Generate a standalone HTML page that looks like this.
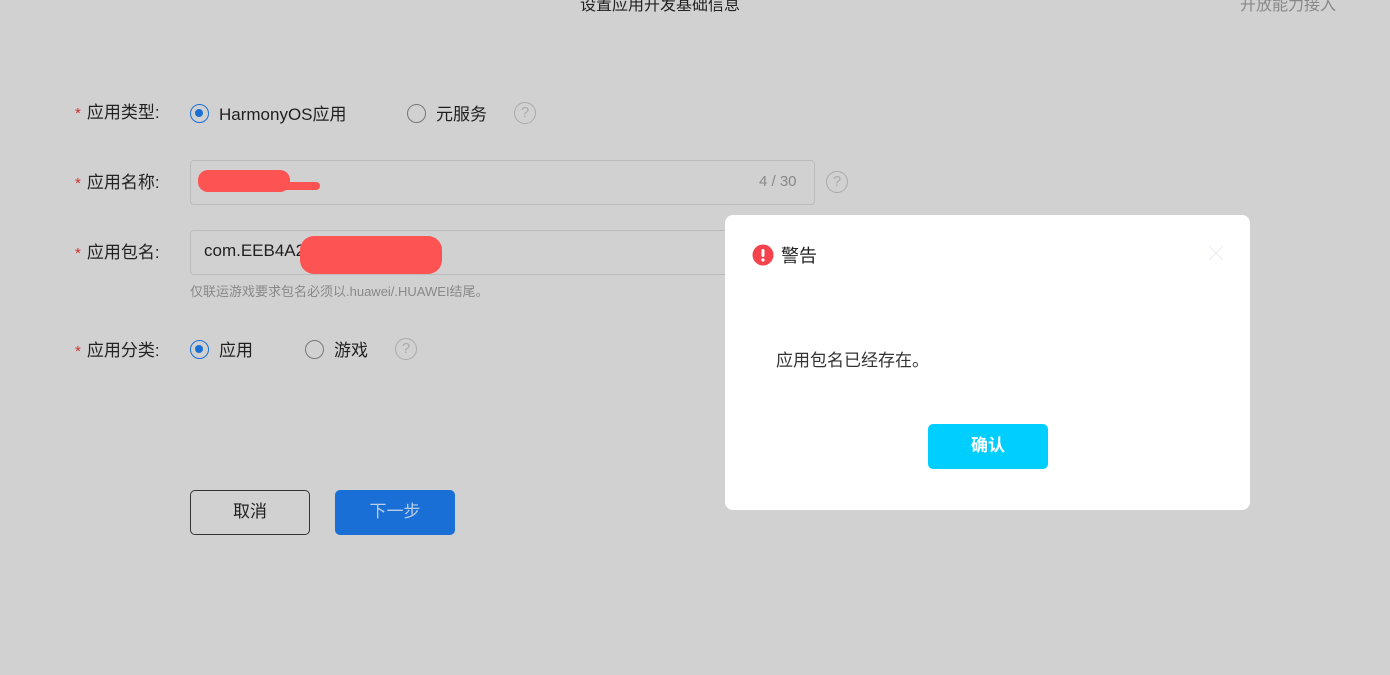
<!DOCTYPE html><html><head><meta charset="utf-8"><style>
body{margin:0;width:1390px;height:675px;background:#d1d1d1;font-family:"Liberation Sans","Noto Sans CJK SC",sans-serif;position:relative;overflow:hidden;color:#1f1f1f}
.a{position:absolute;white-space:nowrap}
.lbl{font-size:17px;color:#222}
.lbl b{color:#d0302f;font-weight:normal;margin-right:6px;font-size:15px}
.radio{position:absolute;width:19px;height:19px;border:1.5px solid #777;border-radius:50%;box-sizing:border-box}
.radio.on{border-color:#1a6fd6}
.radio.on:after{content:"";position:absolute;left:4px;top:4px;width:8px;height:8px;border-radius:50%;background:#1a6fd6}
.q{position:absolute;width:22px;height:22px;border:1.5px solid #aaa;border-radius:50%;box-sizing:border-box;color:#aaa;font-size:15px;text-align:center;line-height:20px}
.inp{position:absolute;border:1px solid #bcbcbc;border-radius:4px;box-sizing:border-box;background:#d1d1d1}
.scr{position:absolute;background:#fd5353;border-radius:10px}
</style></head><body>
<div class="a" style="left:580px;top:-9px;font-size:16px;color:#222">设置应用开发基础信息</div>
<div class="a" style="left:1240px;top:-9px;font-size:16px;color:#888">开放能力接入</div>

<div class="a lbl" style="left:75px;top:98px"><b>*</b>应用类型:</div>
<div class="radio on" style="left:190px;top:104px"></div>
<div class="a" style="left:219px;top:100px;font-size:17px">HarmonyOS应用</div>
<div class="radio" style="left:407px;top:104px"></div>
<div class="a" style="left:436px;top:100px;font-size:17px">元服务</div>
<div class="q" style="left:514px;top:102px">?</div>

<div class="a lbl" style="left:75px;top:168px"><b>*</b>应用名称:</div>
<div class="inp" style="left:190px;top:160px;width:625px;height:45px"></div>
<div class="scr" style="left:198px;top:170px;width:92px;height:22px"></div>
<div class="scr" style="left:280px;top:182px;width:40px;height:8px"></div>
<div class="a" style="left:759px;top:173px;font-size:15px;color:#888">4 / 30</div>
<div class="q" style="left:826px;top:171px">?</div>

<div class="a lbl" style="left:75px;top:238px"><b>*</b>应用包名:</div>
<div class="inp" style="left:190px;top:230px;width:625px;height:45px"></div>
<div class="a" style="left:204px;top:241px;font-size:17px">com.EEB4A2</div>
<div class="scr" style="left:300px;top:236px;width:142px;height:38px;border-radius:14px"></div>
<div class="a" style="left:190px;top:281px;font-size:13px;color:#888">仅联运游戏要求包名必须以.huawei/.HUAWEI结尾。</div>

<div class="a lbl" style="left:75px;top:336px"><b>*</b>应用分类:</div>
<div class="radio on" style="left:190px;top:340px"></div>
<div class="a" style="left:219px;top:336px;font-size:17px">应用</div>
<div class="radio" style="left:305px;top:340px"></div>
<div class="a" style="left:334px;top:336px;font-size:17px">游戏</div>
<div class="q" style="left:395px;top:338px">?</div>

<div class="a" style="left:190px;top:490px;width:120px;height:45px;border:1px solid #333;border-radius:5px;box-sizing:border-box;text-align:center;line-height:41px;font-size:17px">取消</div>
<div class="a" style="left:335px;top:490px;width:120px;height:45px;background:#1a6fd6;border-radius:5px;text-align:center;line-height:43px;font-size:17px;color:#b9cdea">下一步</div>

<div class="a" style="left:725px;top:215px;width:525px;height:295px;background:#fff;border-radius:8px"></div>
<svg class="a" style="left:752px;top:244px" width="22" height="22"><circle cx="11" cy="11" r="10.5" fill="#f4434c"/><rect x="9.5" y="5" width="3" height="8" rx="1.5" fill="#fff"/><circle cx="11" cy="16" r="1.6" fill="#fff"/></svg>
<div class="a" style="left:781px;top:242px;font-size:18px;color:#222">警告</div>
<svg class="a" style="left:1208px;top:245px" width="16" height="16"><path d="M1 1L15 15M15 1L1 15" stroke="#e8ebf0" stroke-width="1"/></svg>
<div class="a" style="left:776px;top:346px;font-size:17px;color:#333">应用包名已经存在。</div>
<div class="a" style="left:928px;top:424px;width:120px;height:45px;background:#00ceff;border-radius:5px;text-align:center;line-height:43px;font-size:17px;color:#fff;font-weight:bold">确认</div>
</body></html>
